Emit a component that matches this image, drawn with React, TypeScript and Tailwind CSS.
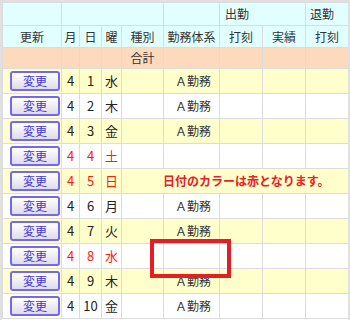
import React from "react";

type Day = { d: number; w: string; red?: boolean; work?: boolean };

const DAYS: Day[] = [
  { d: 1, w: "水", work: true },
  { d: 2, w: "木", work: true },
  { d: 3, w: "金", work: true },
  { d: 4, w: "土", red: true },
  { d: 5, w: "日", red: true },
  { d: 6, w: "月", work: true },
  { d: 7, w: "火", work: true },
  { d: 8, w: "水", red: true },
  { d: 9, w: "木", work: true },
  { d: 10, w: "金", work: true },
];

const cell = "border border-[#dcdcdc] p-0";

function ChangeButton() {
  return (
    <button
      type="button"
      className="flex h-[20px] w-[50px] items-center justify-center rounded-[3px] border-2 border-[#7468f0] bg-gradient-to-b from-white to-[#dedce8] text-[12px] leading-none text-[#4436d8]"
    >
      変更
    </button>
  );
}

export default function App() {
  return (
    <div
      className="relative h-[320px] w-[350px] overflow-hidden border-2 border-b-0 border-[#e0e0e0] bg-white text-[12px] text-[#333]"
      style={{ fontFamily: '"Noto Sans CJK JP", "Noto Sans", sans-serif' }}
    >
      <table className="w-[346px] table-fixed border-collapse">
        <colgroup>
          <col className="w-[59px]" />
          <col className="w-[18px]" />
          <col className="w-[22px]" />
          <col className="w-[20px]" />
          <col className="w-[42px]" />
          <col className="w-[56px]" />
          <col className="w-[43px]" />
          <col className="w-[43px]" />
          <col className="w-[43px]" />
        </colgroup>
        <tbody>
          <tr className="h-[23px] bg-[#e2ffff]">
            <td className={cell} />
            <td className={cell} colSpan={4} />
            <td className={cell} />
            <td className={`${cell} pl-[5px] text-left`} colSpan={2}>
              出勤
            </td>
            <td className={`${cell} pl-[4px] text-left`}>退勤</td>
          </tr>
          <tr className="h-[22px] bg-[#e2ffff] text-center">
            <td className={cell}>更新</td>
            <td className={cell}>月</td>
            <td className={cell}>日</td>
            <td className={cell}>曜</td>
            <td className={cell}>種別</td>
            <td className={cell}>勤務体系</td>
            <td className={cell}>打刻</td>
            <td className={cell}>実績</td>
            <td className={cell}>打刻</td>
          </tr>
          <tr className="h-[21px] bg-[#fedabd] text-center">
            <td className={cell} />
            <td className={cell} />
            <td className={cell} />
            <td className={cell} />
            <td className={cell}>合計</td>
            <td className={cell} />
            <td className={cell} />
            <td className={cell} />
            <td className={cell} />
          </tr>
          {DAYS.map((day, i) => {
            const tone = day.red ? "text-[#ff1a1a]" : "text-[#222]";
            return (
              <tr
                key={day.d}
                className={`h-[25px] text-center text-[13px] ${i % 2 === 0 ? "bg-[#ffffcc]" : "bg-white"}`}
              >
                <td className={`${cell} pl-[7px]`}>
                  <ChangeButton />
                </td>
                <td className={`${cell} ${tone}`}>4</td>
                <td className={`${cell} ${tone}`}>{day.d}</td>
                <td className={`${cell} ${tone}`}>{day.w}</td>
                <td className={cell} />
                <td className={`${cell} pl-[3px] text-[12px]`}>
                  {day.work ? "Ａ勤務" : ""}
                </td>
                <td className={cell} />
                <td className={cell} />
                <td className={cell} />
              </tr>
            );
          })}
        </tbody>
      </table>

      <div className="absolute left-[153px] top-[167px] flex h-[24px] w-[192px] items-center bg-[#ffffcc] pl-[8px] text-[12px] font-bold text-[#e8202a]">
        日付のカラーは赤となります。
      </div>
      <div className="absolute left-[148px] top-[237px] h-[39px] w-[81px] border-4 border-[#e31e24]" />
    </div>
  );
}
